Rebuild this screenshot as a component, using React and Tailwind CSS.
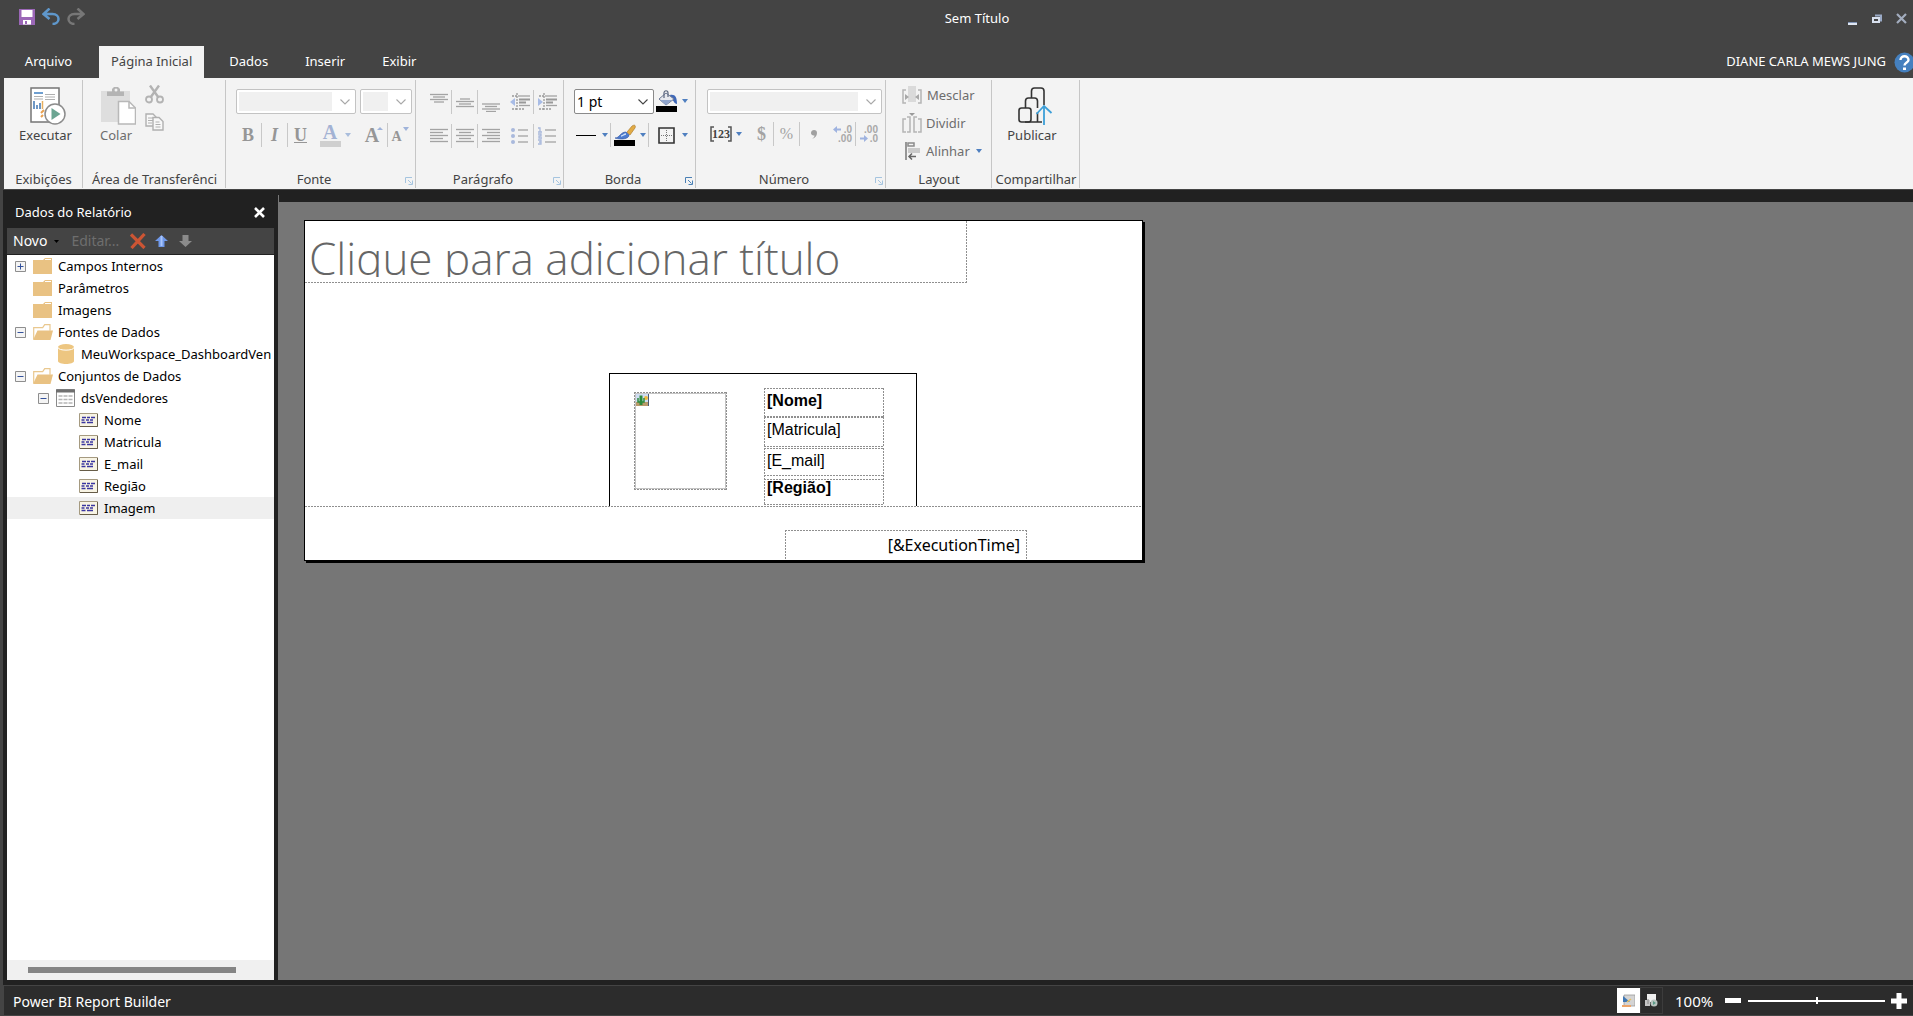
import { useState } from "react";

const tabs = ["Página Inicial", "Dados", "Inserir", "Exibir"];

const treeItems = [
    { label: "Campos Internos", level: 0, icon: "folder", toggle: "plus" },
    { label: "Parâmetros", level: 0, icon: "folder" },
    { label: "Imagens", level: 0, icon: "folder" },
    { label: "Fontes de Dados", level: 0, icon: "open", toggle: "minus" },
    { label: "MeuWorkspace_DashboardVen", level: 1, icon: "database" },
    { label: "Conjuntos de Dados", level: 0, icon: "open", toggle: "minus" },
    { label: "dsVendedores", level: 1, icon: "table", toggle: "minus" },
    { label: "Nome", level: 2, icon: "field" },
    { label: "Matricula", level: 2, icon: "field" },
    { label: "E_mail", level: 2, icon: "field" },
    { label: "Região", level: 2, icon: "field" },
    { label: "Imagem", level: 2, icon: "field" },
];

const levelPadding = ["pl-2", "pl-[31px]", "pl-[54px]"];

// fine dashed outline used by every item on the report page
const dashTop = "bg-[repeating-linear-gradient(90deg,#8f8f8f_0_2px,transparent_2px_3px)] h-px";
const dashSide = "bg-[repeating-linear-gradient(180deg,#8f8f8f_0_2px,transparent_2px_3px)] w-px";

function Dashes({ top = true, right = true, bottom = true, left = true }) {
    return (
        <>
            {top && <span className={`absolute left-0 right-0 top-0 ${dashTop}`} />}
            {bottom && <span className={`absolute left-0 right-0 bottom-0 ${dashTop}`} />}
            {left && <span className={`absolute top-0 bottom-0 left-0 ${dashSide}`} />}
            {right && <span className={`absolute top-0 bottom-0 right-0 ${dashSide}`} />}
        </>
    );
}

function Arrow({ faded }) {
    return (
        <svg width="6" height="4" viewBox="0 0 6 4" className="shrink-0">
            <path d="M0 0h6L3 4z" fill={faded ? "#a9bddc" : "#4f7fc0"} />
        </svg>
    );
}

function Divider() {
    return <span className="h-6 w-px shrink-0 bg-[#c8c8c8]" />;
}

function IconButton({ label, className = "w-[25px]", children }) {
    return (
        <button type="button" aria-label={label} className={`flex h-6 shrink-0 items-center justify-center gap-1 ${className}`}>
            {children}
        </button>
    );
}

function Combo({ label, value, disabled, className }) {
    return (
        <div className={`relative flex h-[25px] shrink-0 rounded-xs border bg-white p-[2px] ${disabled ? "border-[#c3c3c3]" : "border-[#8a8a8a]"} ${className}`}>
            <select
                aria-label={label}
                disabled={disabled}
                className={`mr-[21px] min-w-0 flex-1 appearance-none text-[14px] leading-[19px] text-black outline-none ${disabled ? "bg-[#f0f0f0]" : "bg-white"}`}
            >
                <option>{value}</option>
            </select>
            <svg width="10" height="6" viewBox="0 0 10 6" className="pointer-events-none absolute right-[5px] top-[9px]">
                <path d="M.5.5 5 5 9.500.5" fill="none" stroke={disabled ? "#a8a8a8" : "#444"} strokeWidth="1.100" />
            </svg>
        </div>
    );
}

function Group({ title, width, launcher, children }) {
    return (
        <section className={`relative flex shrink-0 flex-col ${width}`}>
            <div className="flex-1">{children}</div>
            <h2 className={`flex h-5 justify-center whitespace-nowrap leading-5 ${launcher ? "pr-[14px]" : ""}`}>{title}</h2>
            {launcher && (
                <button type="button" aria-label={`Opções de ${title}`} className="absolute bottom-1 right-[3px]">
                    <svg width="8" height="8" viewBox="0 0 8 8" fill="none" stroke={launcher === "on" ? "#4a80b5" : "#a5c4df"}>
                        <path d="M.5 6V.5H7M3 3l3.500 3.500M7.500 3.500v4h-4" />
                    </svg>
                </button>
            )}
            <span className="absolute right-0 top-[2px] bottom-px w-px bg-[#c6c6c6]" />
        </section>
    );
}

function RunIcon() {
    return (
        <svg width="36" height="38" viewBox="0 0 36 38" fill="none">
            <path d="M1 1h28v34H1z" fill="#fff" stroke="#767676" strokeWidth="1.500" />
            <path d="M4 6h9" stroke="#6f9fd0" strokeWidth="2" />
            <path d="M4 9.500h9M4 12h9M15 7.500h10M15 10h10M15 12.500h10" stroke="#b0b0b0" />
            <path d="M4 14v8M7 22v-4M10 22v-6" stroke="#3f77b4" strokeWidth="1.500" />
            <path d="M12.500 22v-8" stroke="#e8b060" strokeWidth="1.500" />
            <path d="M11 26l3-3M11 30l2-2" stroke="#e8a050" strokeWidth="2" />
            <circle cx="25" cy="27" r="10" fill="#fff" stroke="#8c8c8c" strokeWidth="1.500" />
            <path d="M21.500 21v12l9-6z" fill="#6ba592" />
        </svg>
    );
}

function PasteIcon() {
    return (
        <svg width="36" height="38" viewBox="0 0 36 38" fill="none">
            <path d="M1 4h29v31H1z" fill="#dedede" />
            <path d="M7 9V4.500h5V2l2-2h4l2 2v2.500h4V9z" fill="#b4b4b4" />
            <circle cx="16" cy="3" r="1.500" fill="#f3f3f3" />
            <path d="M18.500 14.500H29l6.500 6.500v16h-17z" fill="#fff" stroke="#b8b8b8" strokeWidth="1.500" />
            <path d="M29 14.500V21h6.500" stroke="#b8b8b8" strokeWidth="1.500" />
        </svg>
    );
}

function CutIcon() {
    return (
        <svg width="19" height="19" viewBox="0 0 19 19" fill="none" stroke="#b3b3b3" strokeWidth="1.800">
            <path d="M5 .5l8.500 12M14 .5l-8.500 12" strokeWidth="2.400" />
            <circle cx="4" cy="14.500" r="3" />
            <circle cx="15" cy="14.500" r="3" />
        </svg>
    );
}

function CopyIcon() {
    return (
        <svg width="19" height="18" viewBox="0 0 19 18" fill="#f8f8f8" stroke="#b0b0b0" strokeWidth="1.400">
            <path d="M1 1h7l3 3v9H1z" />
            <path d="M3 5h5M3 7.500h5M3 10h4" strokeWidth="1" />
            <path d="M8 4.500h6l4 4v8.500H8z" />
            <path d="M10.500 9h4M10.500 11.500h5M10.500 14h5" strokeWidth="1" />
        </svg>
    );
}

// horizontal strokes given as [x1, x2, y]
function Lines({ rows, width = 18, height = 20, stroke = "#a3a3a3", children }) {
    return (
        <svg width={width} height={height} viewBox={`0 0 ${width} ${height}`} fill="none" stroke={stroke} strokeWidth="1.300">
            {rows.map(([x1, x2, y], i) => (
                <path key={i} d={`M${x1} ${y}H${x2}`} />
            ))}
            {children}
        </svg>
    );
}

function IndentIcon({ arrow }) {
    return (
        <Lines width={20} rows={[[8, 20, 4], [9, 20, 13.5]]}>
            <path d="M9 7.500h11M9 10.500h7" stroke="#999" strokeWidth="2" />
            <path d="M2 4h5M2 17h5M9 17h6M7 1v18" stroke="#999" strokeDasharray="2 1" />
            <path d={arrow} fill="#a8bce6" stroke="none" />
        </Lines>
    );
}

function PublishIcon() {
    return (
        <svg width="36" height="38" viewBox="0 0 36 38" fill="none" stroke="#333" strokeWidth="1.600">
            <path d="M13.500 11V4q0-3 3-3H23q3 0 3 3v14" />
            <path d="M7.500 21v-7q0-3 3-3h6q3 0 3 3v7" />
            <rect x="1" y="21" width="12" height="14" rx="2.500" />
            <path d="M7 35h17M19.500 25v10" />
            <path d="M26 38V19M18.500 27 26 19l7.500 7" stroke="#3d9fd8" strokeWidth="1.800" />
        </svg>
    );
}

function TreeIcon({ name }) {
    if (name === "database") {
        return (
            <svg width="20" height="20" viewBox="-2 0 20 20">
                <path d="M0 4v13c0 4 16 4 16 0V4z" fill="#edc681" />
                <ellipse cx="8" cy="3" rx="8" ry="3" fill="#edc681" />
                <path d="M0 3.500c0 3.500 16 3.500 16 0" stroke="#fff" fill="none" />
            </svg>
        );
    }
    if (name === "table") {
        return (
            <svg width="19" height="18" viewBox="0 0 19 18" fill="none">
                <path d="M.5.500h18v17H.5z" fill="#fff" stroke="#8a8a8a" />
                <path d="M0 2h19" stroke="#6f6f6f" strokeWidth="3" />
                <path d="M2.500 7h14M2.500 10.500h14M2.500 14h14" stroke="#b5b5b5" strokeWidth="1.500" strokeDasharray="4 1" />
            </svg>
        );
    }
    if (name === "field") {
        return (
            <svg width="19" height="14" viewBox="0 0 19 14" fill="none">
                <path d="M.5.500h18v13H.5z" fill="#f8f4e4" stroke="#a59a80" />
                <path d="M1 13.500h17.500V1" stroke="#665c48" />
                <path d="M3 4.500h4M8 4.500h3M12 4.500h4M2.500 7h3M7 7h3M11 7h3M2.500 9.500h4M8 9.500h6" stroke="#3a36a0" strokeWidth="1.500" />
            </svg>
        );
    }
    if (name === "open") {
        return (
            <svg width="20" height="17" viewBox="0 0 20 17" fill="none">
                <path d="M.7 15V3.700h9l2-3H17v6" fill="#fff" stroke="#e9c88f" strokeWidth="1.200" />
                <path d="M4.500 6.500H20L17.500 16H0z" fill="#e9c283" />
            </svg>
        );
    }
    return (
        <svg width="20" height="17" viewBox="0 0 20 17">
            <path d="M0 2h10l2-2h7v16H0z" fill="#e9c283" />
            <path d="M12 1.500h6" stroke="#fff" />
        </svg>
    );
}

function Toggle({ kind }) {
    return (
        <button type="button" aria-label={kind === "plus" ? "Expandir" : "Recolher"} className="w-[11px] shrink-0">
            <svg width="11" height="11" viewBox="0 0 11 11" fill="none">
                <path d="M.5.500h10v10H.5z" fill="#f4f4f4" stroke="#8e8e8e" />
                <path d="M2.500 5.500h6" stroke="#34529c" />
                {kind === "plus" && <path d="M5.500 2.500v6" stroke="#34529c" />}
            </svg>
        </button>
    );
}

function TitleBar() {
    return (
        <div className="flex h-[46px] items-start justify-between pl-[19px] pr-[6px]">
            <div className="flex flex-1 gap-[7px] pt-2">
                <button type="button" aria-label="Salvar">
                    <svg width="16" height="17" viewBox="0 0 16 17">
                        <path d="M0 1h16v16H0z" fill="#9b67b7" />
                        <path d="M2.500 2h11v7h-11zM4 12h8v4.500H4z" fill="#fff" />
                        <path d="M6 13h2v3H6z" fill="#9b67b7" />
                    </svg>
                </button>
                <button type="button" aria-label="Desfazer">
                    <svg width="18" height="17" viewBox="0 0 18 17" fill="none" stroke="#5f97cb" strokeWidth="2.500">
                        <path d="M7.500.5 1.500 6l6 5M2 6h8.500c8 0 8 10 0 10" />
                    </svg>
                </button>
                <button type="button" aria-label="Refazer">
                    <svg width="18" height="17" viewBox="0 0 18 17" fill="none" stroke="#777" strokeWidth="2.500">
                        <path d="M10.500.5 16.500 6l-6 5M16 6H7.500c-8 0-8 10 0 10" />
                    </svg>
                </button>
            </div>
            <h1 className="ml-7 pt-2 text-[13px] leading-5">Sem Título</h1>
            <div className="flex flex-1 justify-end gap-[14px] pt-3">
                <button type="button" aria-label="Minimizar">
                    <svg width="10" height="13" viewBox="0 0 10 13">
                        <path d="M0 10h9v3H0z" fill="#dfe6f2" />
                        <path d="M0 10h9v1H0z" fill="#7f93b5" />
                    </svg>
                </button>
                <button type="button" aria-label="Restaurar">
                    <svg width="10" height="12" viewBox="0 0 10 12" fill="none">
                        <path d="M3 2.500h6v5H7" stroke="#9aaac6" strokeWidth="2" />
                        <path d="M1 5h6v4H1z" stroke="#d8e0ee" strokeWidth="2" />
                    </svg>
                </button>
                <button type="button" aria-label="Fechar">
                    <svg width="11" height="12" viewBox="0 0 11 12" fill="none">
                        <path d="M1 1l9 9M10 1l-9 9" stroke="#a3adbf" strokeWidth="2.200" />
                    </svg>
                </button>
            </div>
        </div>
    );
}

function Ribbon() {
    return (
        <div className="ml-1 flex h-[111px] overflow-hidden bg-[#f3f3f3] text-[13px] text-[#444]">
            <Group title="Exibições" width="w-[79px]">
                <button type="button" className="mx-auto flex flex-col items-center pt-[9px] pl-1">
                    <span className="pl-1"><RunIcon /></span>
                    <span className="leading-5">Executar</span>
                </button>
            </Group>

            <Group title="Área de Transferênci" width="w-[143px]">
                <div className="flex gap-[9px] pl-[17px]">
                    <button type="button" className="flex flex-col items-start pt-[9px] text-[#6d6d6d]">
                        <PasteIcon />
                        <span className="leading-5">Colar</span>
                    </button>
                    <div className="flex flex-col gap-[9px] pt-[7px]">
                        <button type="button" aria-label="Recortar"><CutIcon /></button>
                        <button type="button" aria-label="Copiar"><CopyIcon /></button>
                    </div>
                </div>
            </Group>

            <Group title="Fonte" width="w-[190px]" launcher="off">
                <div className="flex gap-1 pt-[11px] pl-[10px]">
                    <Combo label="Fonte" disabled className="w-[120px]" />
                    <Combo label="Tamanho da fonte" disabled className="w-[52px]" />
                </div>
                <div className="flex pt-[9px] pl-[9px] font-['Liberation_Serif',serif] text-[18px] font-bold leading-6 text-[#969696]">
                    <IconButton label="Negrito" className="w-[26px]">B</IconButton>
                    <Divider />
                    <IconButton label="Itálico"><i>I</i></IconButton>
                    <Divider />
                    <IconButton label="Sublinhado"><span className="underline">U</span></IconButton>
                    <IconButton label="Cor da fonte" className="ml-1 w-9">
                        <span className="flex w-[21px] flex-col items-center border-b-6 border-[#cfcfcf] text-[20px] leading-[17px] text-[#a3b2d3]">A</span>
                        <Arrow faded />
                    </IconButton>
                    <IconButton label="Aumentar fonte" className="relative ml-2 w-[26px] text-[20px]">
                        <span className="pr-1">A</span>
                        <svg width="6" height="3" viewBox="0 0 6 3" className="absolute top-1 right-1"><path d="M0 3l3-3 3 3z" fill="#9fb3da" /></svg>
                    </IconButton>
                    <Divider />
                    <IconButton label="Diminuir fonte" className="relative w-[25px] text-[14px]">
                        <span className="pt-1 pr-2">A</span>
                        <svg width="6" height="4" viewBox="0 0 6 4" className="absolute top-1 right-1"><path d="M0 0h6L3 4z" fill="#9fb3da" /></svg>
                    </IconButton>
                </div>
            </Group>

            <Group title="Parágrafo" width="w-[148px]" launcher="off">
                <div className="flex pt-3 pl-[10px]">
                    <IconButton label="Alinhar acima"><Lines rows={[[0, 18, 2.5], [3, 15, 5], [0, 18, 7.5], [4, 14, 10]]} /></IconButton>
                    <Divider />
                    <IconButton label="Centralizar na vertical"><Lines rows={[[4, 14, 7], [0, 18, 9.5], [3, 15, 12], [0, 18, 14.5]]} /></IconButton>
                    <Divider />
                    <IconButton label="Alinhar abaixo"><Lines rows={[[0, 18, 12], [3, 15, 14.5], [0, 18, 17], [4, 14, 19.5]]} /></IconButton>
                    <IconButton label="Diminuir recuo" className="ml-1 w-[26px]"><IndentIcon arrow="M0 10l5-4v8z" /></IconButton>
                    <Divider />
                    <IconButton label="Aumentar recuo"><IndentIcon arrow="M6 10 1 6v8z" /></IconButton>
                </div>
                <div className="flex pt-[10px] pl-[10px]">
                    <IconButton label="Alinhar à esquerda"><Lines rows={[[0, 18, 3.5], [0, 13, 6.5], [0, 18, 9.5], [0, 13, 12.5], [0, 18, 15.5]]} /></IconButton>
                    <Divider />
                    <IconButton label="Centralizar"><Lines rows={[[0, 18, 3.5], [3, 15, 6.5], [0, 18, 9.5], [3, 15, 12.5], [0, 18, 15.5]]} /></IconButton>
                    <Divider />
                    <IconButton label="Alinhar à direita"><Lines rows={[[0, 18, 3.5], [5, 18, 6.5], [0, 18, 9.5], [5, 18, 12.5], [0, 18, 15.5]]} /></IconButton>
                    <IconButton label="Marcadores" className="ml-1 w-[26px]">
                        <Lines rows={[[7, 17, 4], [7, 17, 10], [7, 17, 16]]}>
                            <g fill="#a9b9dc" stroke="none"><circle cx="2" cy="4" r="2" /><circle cx="2" cy="10" r="2" /><circle cx="2" cy="16" r="2" /></g>
                        </Lines>
                    </IconButton>
                    <Divider />
                    <IconButton label="Numeração">
                        <Lines rows={[[7, 18, 4], [7, 18, 10], [7, 18, 16]]}>
                            <path d="M0 2h2v4M0 6h4M0 8h3v2H1v2h3M0 14h3v4H0M1 16h2" stroke="#a9b9dc" />
                        </Lines>
                    </IconButton>
                </div>
            </Group>

            <Group title="Borda" width="w-[132px]" launcher="on">
                <div className="flex items-start pt-[11px] pl-[10px]">
                    <Combo label="Espessura da borda" value="1 pt" className="w-[80px]" />
                    <IconButton label="Cor de preenchimento" className="w-9">
                        <svg width="22" height="22" viewBox="0 0 22 22">
                            <path d="M0 16h21v6H0z" />
                            <path d="M14 5c5-1 7 2 7 9-3 0-3-4-6-5z" fill="#3f68b8" />
                            <path d="M3 9l7-6 8 6-8 6z" fill="#e6e8ee" stroke="#6c7894" />
                            <path d="M4 10h12l-6 5z" fill="#8fa4cc" />
                            <path d="M8 8V3c0-3 4-3 4 0v4" fill="none" stroke="#5a657d" strokeWidth="1.200" />
                        </svg>
                        <Arrow />
                    </IconButton>
                </div>
                <div className="flex pt-[9px] pl-[9px]">
                    <IconButton label="Estilo da borda" className="w-[37px]">
                        <span className="mr-[2px] h-px w-5 bg-black" />
                        <Arrow />
                    </IconButton>
                    <Divider />
                    <IconButton label="Cor da borda" className="w-[37px]">
                        <svg width="22" height="22" viewBox="0 0 22 22">
                            <path d="M0 16h21v6H0z" />
                            <path d="M13 8l5-6c3-2 4 0 3 2l-5 7z" fill="#e2ab45" stroke="#a47425" strokeWidth=".6" />
                            <path d="M1 14c5 0 5-6 11-6l3 3c0 4-8 5-14 3z" fill="#4c7bcf" stroke="#2c4f9e" strokeWidth=".6" />
                            <path d="M7 12c2 0 3-2 5-2" stroke="#cfe0fa" strokeWidth="1.500" fill="none" />
                        </svg>
                        <Arrow />
                    </IconButton>
                    <Divider />
                    <IconButton label="Bordas" className="ml-[6px] w-9 gap-[7px]">
                        <svg width="17" height="17" viewBox="0 0 17 17" fill="none">
                            <path d="M1 1h15v15H1z" stroke="#333" strokeWidth="1.600" />
                            <path d="M8.500 3v12M3 8.500h12" stroke="#777" strokeDasharray="1 1" />
                        </svg>
                        <Arrow />
                    </IconButton>
                </div>
            </Group>

            <Group title="Número" width="w-[190px]" launcher="off">
                <div className="flex pt-[11px] pl-[11px]">
                    <Combo label="Formato de número" disabled className="w-[175px]" />
                </div>
                <div className="flex pt-[8px] pl-[14px] font-['Liberation_Serif',serif] text-[18px] font-bold leading-6 text-[#a3a3a3]">
                    <IconButton label="Estilos de espaço reservado" className="w-8">
                        <svg width="22" height="16" viewBox="0 0 22 16" className="shrink-0">
                            <path d="M4 1H1v14h3M18 1h3v14h-3" fill="none" stroke="#555" strokeWidth="1.500" />
                            <text x="11" y="12" textAnchor="middle" fontSize="12" fill="#444">123</text>
                        </svg>
                        <Arrow />
                    </IconButton>
                    <IconButton label="Moeda" className="ml-2 w-[23px]">$</IconButton>
                    <Divider />
                    <IconButton label="Porcentagem"><span className="text-[16px] font-normal">%</span></IconButton>
                    <Divider />
                    <IconButton label="Separador de milhar" className="w-[27px]">
                        <svg width="6" height="9" viewBox="0 0 6 9">
                            <path d="M3 0c2 0 3 1 3 3 0 3-2 5-5 6 2-1.500 2.500-2.500 2.500-3.500C1.500 6 0 4.500 0 3c0-2 1.500-3 3-3z" fill="#a0a0a0" />
                        </svg>
                    </IconButton>
                    <IconButton label="Aumentar casas decimais" className="ml-1 w-6">
                        <svg width="20" height="18" viewBox="0 0 20 18" className="font-['Liberation_Sans',sans-serif]" fill="#a8a8a8">
                            <text x="19" y="8" textAnchor="end" fontSize="10">.0</text>
                            <text x="19" y="17" textAnchor="end" fontSize="10">.00</text>
                            <path d="M0 4.500 4 1v2.500h4v2H4V8z" fill="#9fb3e0" />
                        </svg>
                    </IconButton>
                    <Divider />
                    <IconButton label="Diminuir casas decimais">
                        <svg width="20" height="18" viewBox="0 0 20 18" className="font-['Liberation_Sans',sans-serif]" fill="#a8a8a8">
                            <text x="19" y="8" textAnchor="end" fontSize="10">.00</text>
                            <text x="19" y="17" textAnchor="end" fontSize="10">.0</text>
                            <path d="M9 13.500 5 10v2.500H1v2h4V17z" fill="#9fb3e0" />
                        </svg>
                    </IconButton>
                </div>
            </Group>

            <Group title="Layout" width="w-[106px]">
                <div className="flex flex-col gap-2 pt-[7px] pl-4 text-[#6d6d6d]">
                    <button type="button" className="flex h-5 items-center gap-[5px] leading-5">
                        <svg width="20" height="18" viewBox="0 0 20 18" fill="none" stroke="#b5b5b5" strokeWidth="1.500">
                            <path d="M6 0h8v16H6z" fill="#dadada" stroke="none" />
                            <path d="M4 4H1v13h3M16 4h3v13h-3" />
                            <path d="M3 8l4 3-4 3zM17 8l-4 3 4 3z" fill="#a8a8a8" stroke="none" />
                        </svg>
                        Mesclar
                    </button>
                    <button type="button" className="flex h-5 items-center gap-1 leading-5">
                        <svg width="20" height="20" viewBox="0 0 20 20" fill="none" stroke="#b5b5b5" strokeWidth="1.500">
                            <path d="M4 6H1v13h3M16 6h3v13h-3M5 4h3v15H5M15 4h-3v15h3" />
                            <path d="M7 0h6l-3 3z" fill="#9a9a9a" stroke="none" />
                        </svg>
                        Dividir
                    </button>
                    <button type="button" className="flex h-5 items-center gap-[6px] pl-[3px] leading-5">
                        <svg width="15" height="18" viewBox="0 0 15 18" fill="none">
                            <path d="M1 0v18" stroke="#777" strokeWidth="1.500" />
                            <path d="M3 1h6v3H3z" stroke="#8a8a8a" strokeWidth="1.500" />
                            <path d="M3 6h12v5H3z" fill="#cacaca" />
                            <path d="M4 14.500h7M7 11.500l-3 3 3 3" stroke="#666" strokeWidth="1.500" />
                        </svg>
                        Alinhar
                        <Arrow />
                    </button>
                </div>
            </Group>

            <Group title="Compartilhar" width="w-[88px]">
                <button type="button" className="mx-auto flex flex-col items-center pt-[9px] pr-2">
                    <span className="pl-2"><PublishIcon /></span>
                    <span className="leading-5">Publicar</span>
                </button>
            </Group>
        </div>
    );
}

function DataPanel() {
    const [selected, setSelected] = useState("Imagem");

    return (
        <aside className="flex w-[275px] shrink-0 flex-col bg-[#212121] pr-1 pb-[5px] pl-1">
            <div className="flex h-[38px] items-center justify-between pt-[6px] pr-[9px] pl-2">
                <h2 className="text-[13px] leading-5">Dados do Relatório</h2>
                <button type="button" aria-label="Fechar painel">
                    <svg width="11" height="11" viewBox="0 0 11 11"><path d="M1 1l9 9M10 1l-9 9" stroke="#fff" strokeWidth="2.600" /></svg>
                </button>
            </div>
            <div className="flex h-[27px] shrink-0 items-center border-b border-[#212121] bg-[#444] pl-[6px] text-[14px] leading-6">
                <button type="button" className="flex items-center gap-[7px]">
                    Novo
                    <svg width="5" height="3" viewBox="0 0 5 3"><path d="M0 0h5L2.500 3z" /></svg>
                </button>
                <button type="button" disabled className="ml-3 text-[#6e6e6e]">Editar...</button>
                <button type="button" aria-label="Excluir" className="ml-[11px]">
                    <svg width="16" height="16" viewBox="0 0 16 16"><path d="M1 1.500 14.500 15M14.500 1 1.500 15" stroke="#cc5534" strokeWidth="3.200" /></svg>
                </button>
                <button type="button" aria-label="Mover para cima" className="ml-[9px]">
                    <svg width="13" height="12" viewBox="0 0 13 12"><path d="M6.500 0 13 6H9.500v6h-6V6H0z" fill="#6f98e8" /><path d="M6.500 1v10" stroke="#a9c5fb" strokeWidth="2" /></svg>
                </button>
                <button type="button" aria-label="Mover para baixo" className="ml-[11px]">
                    <svg width="13" height="12" viewBox="0 0 13 12"><path d="M6.500 12 13 6H9.500V0h-6v6H0z" fill="#8b8b8b" /></svg>
                </button>
            </div>
            <ul className="flex-1 bg-white text-[13px] text-black">
                {treeItems.map((item) => (
                    <li
                        key={item.label}
                        onClick={() => setSelected(item.label)}
                        className={`flex h-[22px] items-center ${levelPadding[item.level]} ${item.label === selected ? "bg-[#efefef]" : ""}`}
                    >
                        {item.toggle ? <Toggle kind={item.toggle} /> : <span className="w-[11px] shrink-0" />}
                        <span className="ml-[7px] flex w-5 shrink-0"><TreeIcon name={item.icon} /></span>
                        <span className="ml-[5px] whitespace-nowrap leading-5">{item.label}</span>
                    </li>
                ))}
            </ul>
            <div className="flex h-5 shrink-0 items-center bg-[#f0f0f0] pr-[38px] pl-[21px]">
                <span className="h-[6px] flex-1 bg-[#858585]" />
            </div>
        </aside>
    );
}

function TextItem({ place, bold, children }) {
    return (
        <div className={`absolute w-[120px] pl-[3px] text-[16px] leading-5 ${bold ? "font-bold" : ""} ${place}`}>
            <Dashes />
            {children}
        </div>
    );
}

function ReportPage() {
    return (
        <div className="relative h-[341px] w-[839px] border border-black bg-white text-black shadow-[2px_2px_0_#000]">
            <div className="absolute top-0 left-0 h-[62px] w-[662px] pt-1 pl-1">
                <Dashes top={false} left={false} />
                <p className="h-[52px] overflow-hidden font-['Open_Sans',sans-serif] text-[44px] font-light leading-[66px] whitespace-nowrap text-[#666]">
                    Clique para adicionar título
                </p>
            </div>

            <div className="absolute top-[152px] left-[304px] h-[133px] w-[308px] border border-b-0 border-black font-['Liberation_Sans',sans-serif]">
                <div className="absolute top-[18px] left-6 h-[98px] w-[93px] p-px">
                    <Dashes />
                    <div className="h-full border border-[#c4c4c4]">
                        <svg width="13" height="12" viewBox="0 0 13 12">
                            <path d="M0 0h13v12H0z" fill="#cfdcf2" />
                            <path d="M0 8h13v4H0z" fill="#b89a6a" />
                            <circle cx="10" cy="4" r="2" fill="#efb93c" />
                            <path d="M5 11V1.500" stroke="#2c8a3c" strokeWidth="3" />
                            <path d="M2 4v4h6V4" fill="none" stroke="#2c8a3c" strokeWidth="1.500" />
                            <path d="M12.500 0v12" stroke="#4a5a74" />
                        </svg>
                    </div>
                </div>
                <TextItem bold place="top-[14px] left-[154px] h-[29px] pt-[3px]">[Nome]</TextItem>
                <TextItem place="top-[43px] left-[154px] h-[30px] pt-[3px]">[Matricula]</TextItem>
                <TextItem place="top-[74px] left-[154px] h-8 pt-[3px]">[E_mail]</TextItem>
                <TextItem bold place="top-[101px] left-[154px] h-[30px] pt-[3px]">[Região]</TextItem>
            </div>

            <div className="absolute top-[285px] right-0 left-0">
                <Dashes right={false} bottom={false} left={false} />
            </div>

            <div className="absolute top-[309px] left-[480px] h-[30px] w-[242px] pt-[5px] pr-[7px] text-right text-[16px] leading-5">
                <Dashes bottom={false} />
                [&amp;ExecutionTime]
            </div>
        </div>
    );
}

function StatusBar() {
    const [zoom, setZoom] = useState(50);

    return (
        <footer className="ml-1 flex h-[31px] items-center border-y border-[#444] bg-[#2c2c2c] pr-[6px] pl-[9px]">
            <span className="flex-1 pt-px text-[14px]">Power BI Report Builder</span>
            <button type="button" aria-label="Design" className="flex h-[25px] w-[23px] items-center justify-center bg-white">
                <svg width="13" height="14" viewBox="0 0 13 14">
                    <path d="M2 1h11v11H2z" fill="#d4d4d4" stroke="#9a9a9a" strokeWidth=".8" />
                    <path d="M1 2v6h7z" fill="#3f77b4" />
                    <path d="M0 11h9v2H0z" fill="#eda468" />
                    <path d="M5 8l4-3" stroke="#e8c060" strokeWidth="1.500" />
                </svg>
            </button>
            <button type="button" aria-label="Visualizar" className="flex h-[27px] w-[23px] items-center justify-center border border-[#3c3c3c]">
                <svg width="13" height="13" viewBox="0 0 13 13">
                    <path d="M2 0h9v8H2z" fill="#f0f0f0" />
                    <path d="M0 6h5v6H0z" fill="#c5c5c5" />
                    <path d="M3 5v5" stroke="#888" />
                    <circle cx="9" cy="9" r="3.500" fill="#b9c4c0" />
                    <path d="M8 7l3 2-3 2z" fill="#5d9c88" />
                </svg>
            </button>
            <span className="ml-3 w-[38px] pt-[2px] text-[15px]">100%</span>
            <button type="button" aria-label="Menos zoom" className="ml-3 flex h-4 w-4 items-center"><span className="h-[5px] w-full bg-white" /></button>
            <input
                type="range"
                aria-label="Zoom"
                value={zoom}
                onChange={(e) => setZoom(e.target.value)}
                className="mr-[6px] ml-[7px] h-2 w-[137px] appearance-none bg-[linear-gradient(#fff,#fff)] bg-[length:100%_2px] bg-center bg-no-repeat [&::-webkit-slider-thumb]:h-[7px] [&::-webkit-slider-thumb]:w-[2px] [&::-webkit-slider-thumb]:appearance-none [&::-webkit-slider-thumb]:bg-white"
            />
            <button type="button" aria-label="Mais zoom">
                <svg width="16" height="16" viewBox="0 0 16 16"><path d="M8 0v16M0 8h16" stroke="#fff" strokeWidth="5" /></svg>
            </button>
        </footer>
    );
}

export default function App() {
    const [activeTab, setActiveTab] = useState("Página Inicial");

    return (
        <div className="flex min-h-screen flex-col overflow-hidden bg-[#444] font-['Noto_Sans',sans-serif] text-white">
            <TitleBar />

            <div className="flex h-8 items-stretch text-[13px]">
                <button type="button" className="w-[99px] pr-[2px]">Arquivo</button>
                <nav className="flex flex-1 gap-[13px]">
                    {tabs.map((tab) => (
                        <button
                            key={tab}
                            type="button"
                            onClick={() => setActiveTab(tab)}
                            className={`px-3 ${tab === activeTab ? "bg-[#f3f3f3] text-[#444]" : ""}`}
                        >
                            {tab}
                        </button>
                    ))}
                </nav>
                <span className="flex items-center">DIANE CARLA MEWS JUNG</span>
                <button type="button" aria-label="Ajuda" className="-mr-[2px] ml-2">
                    <svg width="21" height="21" viewBox="0 0 21 21" fill="none">
                        <circle cx="10.500" cy="10.500" r="10" fill="#4580bf" />
                        <path d="M6.500 8c0-5 8-5 8 0 0 2.500-4 2.500-4 5.500" stroke="#fff" strokeWidth="2.400" />
                        <path d="M9 15.500h3v2.500H9z" fill="#fff" />
                    </svg>
                </button>
            </div>

            <Ribbon />

            <main className="mt-px ml-[3px] flex flex-1 bg-[#212121]">
                <DataPanel />
                <div className="flex min-w-0 flex-1 flex-col pb-[5px]">
                    <span className="mt-[5px] h-[7px] w-px bg-[#777]" />
                    <div className="flex-1 bg-[#767676] pt-[18px] pl-[26px]">
                        <ReportPage />
                    </div>
                </div>
            </main>

            <StatusBar />
        </div>
    );
}
